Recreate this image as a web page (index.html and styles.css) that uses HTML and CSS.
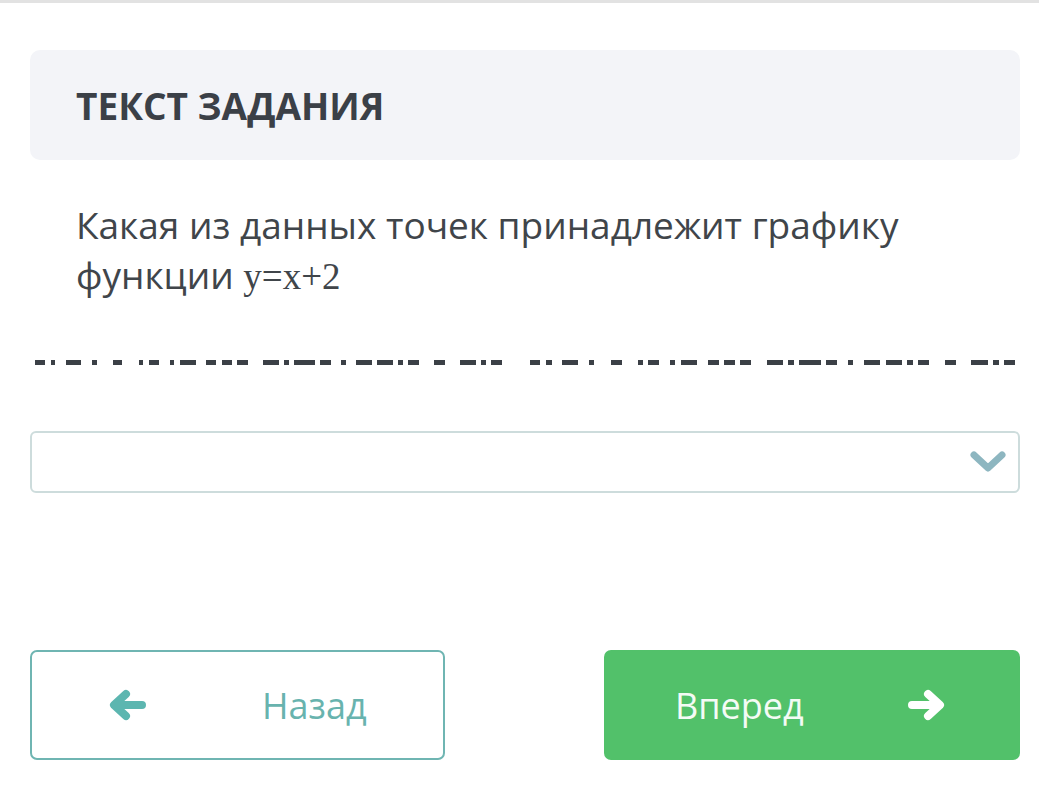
FILE: index.html
```html
<!DOCTYPE html>
<html lang="ru">
<head>
  <meta charset="UTF-8" />
  <title>Текст задания</title>
  <link rel="stylesheet" href="styles.css">
</head>
<body>
  <div class="topline"></div>
  <div class="container">
    <div class="task-head">
      <h2>ТЕКСТ ЗАДАНИЯ</h2>
    </div>

    <p class="question">Какая из данных точек принадлежит графику функции <span class="math">y=x+2</span></p>

    <svg class="cut-line" width="1039" height="6" viewBox="0 0 1039 6">
      <g fill="#3b4046">
        <rect x="35" y="0" width="10" height="5"/><rect x="51" y="0" width="4" height="5"/>
        <rect x="66" y="0" width="15" height="5"/><rect x="92" y="0" width="5" height="5"/>
        <rect x="113" y="0" width="9" height="5"/><rect x="139" y="0" width="4" height="5"/>
        <rect x="149" y="0" width="10" height="5"/><rect x="170" y="0" width="4" height="5"/>
        <rect x="180" y="0" width="16" height="5"/><rect x="206" y="0" width="10" height="5"/>
        <rect x="222" y="0" width="10" height="5"/><rect x="237" y="0" width="11" height="5"/>
        <rect x="263" y="0" width="16" height="5"/><rect x="284" y="0" width="5" height="5"/>
        <rect x="294" y="0" width="21" height="5"/><rect x="320" y="0" width="11" height="5"/>
        <rect x="341" y="0" width="5" height="5"/><rect x="356" y="0" width="16" height="5"/>
        <rect x="377" y="0" width="16" height="5"/><rect x="398" y="0" width="5" height="5"/>
        <rect x="408" y="0" width="11" height="5"/><rect x="434" y="0" width="11" height="5"/>
        <rect x="460" y="0" width="16" height="5"/><rect x="481" y="0" width="5" height="5"/>
        <rect x="491" y="0" width="11" height="5"/>
        <rect x="530" y="0" width="10" height="5"/><rect x="546" y="0" width="6" height="5"/>
        <rect x="562" y="0" width="16" height="5"/><rect x="589" y="0" width="5" height="5"/>
        <rect x="611" y="0" width="11" height="5"/><rect x="638" y="0" width="5" height="5"/>
        <rect x="648" y="0" width="11" height="5"/><rect x="670" y="0" width="5" height="5"/>
        <rect x="681" y="0" width="16" height="5"/><rect x="708" y="0" width="11" height="5"/>
        <rect x="724" y="0" width="11" height="5"/><rect x="740" y="0" width="11" height="5"/>
        <rect x="767" y="0" width="16" height="5"/><rect x="788" y="0" width="6" height="5"/>
        <rect x="799" y="0" width="22" height="5"/><rect x="826" y="0" width="11" height="5"/>
        <rect x="848" y="0" width="5" height="5"/><rect x="864" y="0" width="16" height="5"/>
        <rect x="886" y="0" width="16" height="5"/><rect x="907" y="0" width="6" height="5"/>
        <rect x="918" y="0" width="11" height="5"/><rect x="945" y="0" width="11" height="5"/>
        <rect x="971" y="0" width="17" height="5"/><rect x="993" y="0" width="6" height="5"/>
        <rect x="1004" y="0" width="11" height="5"/>
      </g>
    </svg>

    <div class="select-box">
      <svg class="chevron" width="36" height="24" viewBox="0 0 36 24">
        <path d="M4 5 L18 18 L32 5" fill="none" stroke="#8db6c0" stroke-width="7" stroke-linecap="round" stroke-linejoin="round"/>
      </svg>
    </div>

    <div class="nav">
      <button class="btn btn-back">
        <svg width="40" height="32" viewBox="0 0 40 32">
          <path d="M34 16 H8 M18 5 L6 16 L18 27" fill="none" stroke="#5cb6b0" stroke-width="8" stroke-linecap="round" stroke-linejoin="round"/>
        </svg>
        <span>Назад</span>
      </button>
      <button class="btn btn-next">
        <span>Вперед</span>
        <svg width="40" height="32" viewBox="0 0 40 32">
          <path d="M6 16 H32 M22 5 L34 16 L22 27" fill="none" stroke="#ffffff" stroke-width="8" stroke-linecap="round" stroke-linejoin="round"/>
        </svg>
      </button>
    </div>
  </div>
</body>
</html>
```

FILE: styles.css
```css
body {
  margin: 0;
  font-family: 'Open Sans', 'Noto Sans', sans-serif;
  background: #ffffff;
  color: #3d4248;
}
.topline {
  height: 3px;
  background: #e2e2e2;
}
.container {
  padding: 0 19px 0 30px;
}
.task-head {
  margin-top: 47px;
  height: 110px;
  background: #f3f4f8;
  border-radius: 10px;
  display: flex;
  align-items: center;
  padding-left: 46px;
}
.task-head h2 {
  margin: 0;
  font-size: 37px;
  font-weight: 700;
  color: #3b4047;
}
.question {
  margin: 40px 0 0 46px;
  width: 880px;
  font-size: 37px;
  line-height: 50px;
  color: #40454a;
}
.math {
  font-family: 'Liberation Serif', 'DejaVu Serif', serif;
  font-size: 37px;
  line-height: 50px;
}
.cut-line {
  display: block;
  margin: 58px 0 0 -30px;
}
.select-box {
  margin-top: 65px;
  height: 58px;
  border: 2px solid #cddcdc;
  border-radius: 6px;
  display: flex;
  align-items: center;
  justify-content: flex-end;
  padding-right: 12px;
}
.nav {
  margin-top: 157px;
  display: flex;
  justify-content: space-between;
}
.btn {
  height: 110px;
  border-radius: 7px;
  font-family: 'Open Sans', 'Noto Sans', sans-serif;
  font-size: 36px;
  display: flex;
  align-items: center;
  cursor: pointer;
}
.btn-back {
  width: 415px;
  background: #ffffff;
  border: 2px solid #6fb5b2;
  color: #68b3ae;
  padding: 0 0 0 76px;
}
.btn-back span {
  margin-left: 114px;
}
.btn-next {
  width: 416px;
  background: #52c16a;
  border: none;
  color: #f4fbf5;
  padding: 0 0 0 71px;
}
.btn-next svg {
  margin-left: 102px;
}
```
